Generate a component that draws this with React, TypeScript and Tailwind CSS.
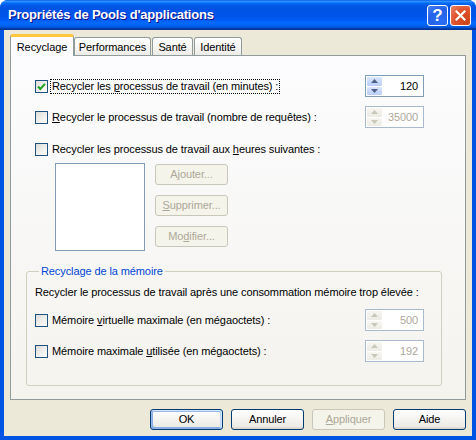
import type { ReactNode } from 'react';

const titleGradient =
  'bg-[linear-gradient(to_bottom,#0058EE_0%,#3593FF_4%,#288EFF_6%,#127DFF_8%,#036FFC_10%,#0262EE_14%,#0057E5_20%,#0054E3_24%,#0055EB_56%,#005BF5_66%,#026AFE_76%,#0062EF_86%,#0052D6_92%,#0040AB_94%,#003092_100%)]';

function Checkbox({ checked = false }: { checked?: boolean }) {
  return (
    <span className="flex h-[13px] w-[13px] shrink-0 items-center justify-center border border-[#1D5281] bg-[linear-gradient(135deg,#DCDCD7,#FFFFFF)]">
      {checked && (
        <svg width="9" height="9" viewBox="0 0 9 9">
          <polyline points="1,4.5 3.3,7 8,1.8" fill="none" stroke="#21A121" strokeWidth="2" />
        </svg>
      )}
    </span>
  );
}

function Arrow({ down, color }: { down?: boolean; color: string }) {
  return (
    <svg width="7" height="4" viewBox="0 0 7 4" className={down ? 'rotate-180' : ''}>
      <path d="M0 4 L3.5 0 L7 4 Z" fill={color} />
    </svg>
  );
}

function Spin({ value, disabled }: { value: string; disabled?: boolean }) {
  return (
    <div
      className={`flex h-[22px] w-[59px] shrink-0 border bg-white ${
        disabled ? 'border-[#A9B9CF] text-[#ACA899]' : 'border-[#7F9DB9] text-black'
      }`}
    >
      <div className="m-[1px] flex w-[15px] flex-col gap-[1px]">
        {[false, true].map((down) => (
          <div
            key={String(down)}
            className={`flex flex-1 items-center justify-center rounded-[1px] ${
              disabled
                ? 'bg-[linear-gradient(to_bottom,#F7F6F1,#ECEBE4)]'
                : 'bg-[linear-gradient(to_bottom,#DCE6FD,#B9CDF9)]'
            }`}
          >
            <Arrow down={down} color={disabled ? '#C9C7BA' : '#4D6185'} />
          </div>
        ))}
      </div>
      <span className="flex flex-1 items-center justify-end pr-[5px]">{value}</span>
    </div>
  );
}

function Button({
  children,
  disabled,
  isDefault,
}: {
  children: ReactNode;
  disabled?: boolean;
  isDefault?: boolean;
}) {
  const look = disabled
    ? 'border-[#C9C7BA] bg-[#F5F4EA] text-[#ACA899]'
    : 'border-[#003C74] bg-[linear-gradient(180deg,#FFFFFF,#ECEBE6_86%,#D6D0C5)] text-black';
  const ring = isDefault
    ? 'shadow-[inset_-1px_1px_#CEE7FF,inset_1px_2px_#98B8EA,inset_-2px_2px_#BCD4F6,inset_1px_-1px_#89ADE4,inset_2px_-2px_#89ADE4]'
    : '';
  return (
    <div className={`flex h-[21px] w-[73px] items-center justify-center rounded-[3px] border ${look} ${ring}`}>
      {children}
    </div>
  );
}

function Row({ label, spin, focused }: { label: ReactNode; spin?: ReactNode; focused?: boolean }) {
  return (
    <div className="flex h-[22px] items-center justify-between">
      <div className="flex items-center">
        <Checkbox checked={focused} />
        <span
          className={`ml-[2px] px-[1px] leading-[13px] ${
            focused ? 'border border-dotted border-black' : 'border border-transparent'
          }`}
        >
          {label}
        </span>
      </div>
      {spin}
    </div>
  );
}

const tabClass =
  'flex h-[19px] items-center justify-center rounded-t-[3px] border border-b-0 border-[#919B9C] bg-[linear-gradient(to_bottom,#FFFFFF,#ECEBE6)]';

export default function App() {
  return (
    <div className="flex h-[440px] w-[476px] flex-col overflow-hidden rounded-t-[8px] bg-[#0054E3] font-['Liberation_Sans',Tahoma,sans-serif] text-[11px] tracking-[-0.1px] text-black">
      <div className={`flex h-[30px] shrink-0 items-center justify-between pl-[8px] pr-[5px] ${titleGradient}`}>
        <span className="text-[13px] font-bold tracking-[-0.2px] text-white [text-shadow:1px_1px_#0F1089]">
          Propriétés de Pools d'applications
        </span>
        <div className="flex gap-[2px] pt-[1px]">
          <div className="flex h-[21px] w-[21px] items-center justify-center rounded-[3px] border border-white bg-[radial-gradient(circle_at_70%_80%,#2A6DF5,#2463E6_60%,#4F86F2)] text-[17px] font-bold leading-none text-white">
            ?
          </div>
          <div className="flex h-[21px] w-[21px] items-center justify-center rounded-[3px] border border-white bg-[radial-gradient(circle_at_80%_80%,#CC4419,#E0522D_55%,#E8866A)]">
            <svg width="11" height="11" viewBox="0 0 11 11">
              <path d="M1.5 1.5 L9.5 9.5 M9.5 1.5 L1.5 9.5" stroke="white" strokeWidth="2.2" strokeLinecap="square" />
            </svg>
          </div>
        </div>
      </div>

      <div className="mx-[4px] mb-[4px] flex flex-1 flex-col bg-[#ECE9D8] px-[6px] pt-[4px]">
        <div className="flex h-[22px] items-end">
          <div className="relative z-10 flex h-[22px] w-[64px] items-start justify-center rounded-t-[3px] border-x border-t-[3px] border-x-[#919B9C] border-t-[#FFC83C] bg-[#FCFCFE] pt-[2px]">
            Recyclage
          </div>
          <div className={`w-[77px] ${tabClass}`}>Performances</div>
          <div className={`ml-[1px] w-[41px] ${tabClass}`}>Santé</div>
          <div className={`ml-[1px] w-[48px] ${tabClass}`}>Identité</div>
        </div>

        <div className="-mt-[1px] flex h-[345px] flex-col border border-[#919B9C] bg-[linear-gradient(to_bottom,#FCFCFE,#F4F3EE)] pl-[15px] pr-[23px] pt-[19px]">
          <div className="ml-[9px] mr-[18px]">
            <Row
              focused
              label={
                <>
                  Recycler les <u>p</u>rocessus de travail (en minutes) :
                </>
              }
              spin={<Spin value="120" />}
            />
            <div className="mt-[9px]">
              <Row
                label={
                  <>
                    <u>R</u>ecycler le processus de travail (nombre de requêtes) :
                  </>
                }
                spin={<Spin value="35000" disabled />}
              />
            </div>
            <div className="mt-[10px]">
              <Row
                label={
                  <>
                    Recycler les processus de travail aux <u>h</u>eures suivantes :
                  </>
                }
              />
            </div>
            <div className="mt-[3px] flex pl-[20px]">
              <div className="h-[88px] w-[90px] border border-[#7F9DB9] bg-white" />
              <div className="ml-[10px] mt-[1px] flex flex-col gap-[10px]">
                <Button disabled>
                  A<u>j</u>outer...
                </Button>
                <Button disabled>
                  <u>S</u>upprimer...
                </Button>
                <Button disabled>
                  Mo<u>d</u>ifier...
                </Button>
              </div>
            </div>
          </div>

          <fieldset className="mt-[14px] rounded-[3px] border border-[#D0D0BF] pb-[23px] pl-[8px] pr-[17px]">
            <legend className="ml-[4px] px-[2px] leading-[13px] text-[#0046D5]">Recyclage de la mémoire</legend>
            <div className="mt-[7px] h-[14px] leading-[14px]">
              Recycler le processus de travail après une consommation mémoire trop élevée :
            </div>
            <div className="mt-[10px]">
              <Row
                label={
                  <>
                    Mémoire <u>v</u>irtuelle maximale (en mégaoctets) :
                  </>
                }
                spin={<Spin value="500" disabled />}
              />
            </div>
            <div className="mt-[9px]">
              <Row
                label={
                  <>
                    Mémoire maximale <u>u</u>tilisée (en mégaoctets) :
                  </>
                }
                spin={<Spin value="192" disabled />}
              />
            </div>
          </fieldset>
        </div>

        <div className="mt-[9px] flex justify-end gap-[8px]">
          <Button isDefault>OK</Button>
          <Button>Annuler</Button>
          <Button disabled>
            <u>A</u>ppliquer
          </Button>
          <Button>Aide</Button>
        </div>
      </div>
    </div>
  );
}
